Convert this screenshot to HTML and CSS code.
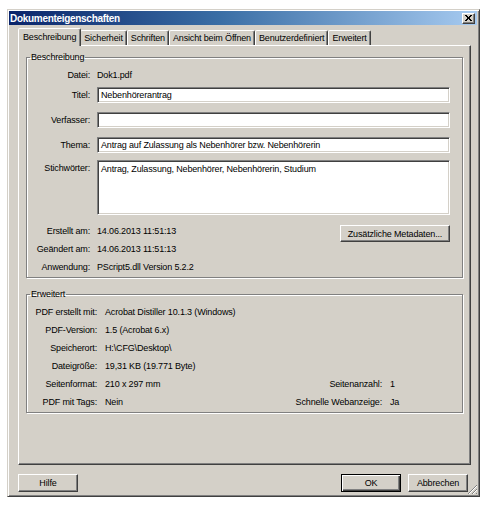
FILE: index.html
```html
<!DOCTYPE html>
<html lang="de">
<head>
    <meta charset="utf-8">
    <title>Dokumenteigenschaften</title>
    <link rel="stylesheet" href="styles.css">
</head>
<body>
    <div class="fenster">
        <div class="titelleiste">
            <span class="titeltext">Dokumenteigenschaften</span>
            <button class="schliessen">
                <svg width="7" height="6" viewBox="0 0 7 6"><path d="M0 0 L6 6 M1 0 L7 6 M6 0 L0 6 M7 0 L1 6" stroke="#000" stroke-width="1"/></svg>
            </button>
        </div>

        <nav class="reiter">
            <button class="reiter-knopf aktiv">Beschreibung</button>
            <button class="reiter-knopf">Sicherheit</button>
            <button class="reiter-knopf">Schriften</button>
            <button class="reiter-knopf">Ansicht beim Öffnen</button>
            <button class="reiter-knopf">Benutzerdefiniert</button>
            <button class="reiter-knopf">Erweitert</button>
        </nav>

        <section class="panel">
            <fieldset class="gruppe beschreibung">
                <legend>Beschreibung</legend>
                <div class="zeile datei"><span class="etikett">Datei:</span><span>Dok1.pdf</span></div>
                <div class="zeile titel"><span class="etikett">Titel:</span><div class="feld">Nebenhörerantrag</div></div>
                <div class="zeile verfasser"><span class="etikett">Verfasser:</span><div class="feld"></div></div>
                <div class="zeile thema"><span class="etikett">Thema:</span><div class="feld">Antrag auf Zulassung als Nebenhörer bzw. Nebenhörerin</div></div>
                <div class="zeile stichwoerter"><span class="etikett">Stichwörter:</span><div class="feld gross">Antrag, Zulassung, Nebenhörer, Nebenhörerin, Studium</div></div>
                <div class="meta">
                    <span class="etikett">Erstellt am:</span><span class="wert">14.06.2013 11:51:13</span>
                    <button class="knopf metadaten">Zusätzliche Metadaten...</button>
                    <span class="etikett">Geändert am:</span><span class="wert">14.06.2013 11:51:13</span>
                    <span class="etikett">Anwendung:</span><span class="wert">PScript5.dll Version 5.2.2</span>
                </div>
            </fieldset>

            <fieldset class="gruppe erweitert">
                <legend>Erweitert</legend>
                <div class="liste">
                    <span class="etikett">PDF erstellt mit:</span><span class="breit">Acrobat Distiller 10.1.3 (Windows)</span>
                    <span class="etikett">PDF-Version:</span><span class="breit">1.5 (Acrobat 6.x)</span>
                    <span class="etikett">Speicherort:</span><span class="breit">H:\CFG\Desktop\</span>
                    <span class="etikett">Dateigröße:</span><span class="breit">19,31 KB (19.771 Byte)</span>
                    <span class="etikett">Seitenformat:</span><span>210 x 297 mm</span>
                    <span class="etikett">Seitenanzahl:</span><span>1</span>
                    <span class="etikett">PDF mit Tags:</span><span>Nein</span>
                    <span class="etikett">Schnelle Webanzeige:</span><span>Ja</span>
                </div>
            </fieldset>
        </section>

        <div class="knoepfe">
            <button class="knopf">Hilfe</button>
            <span class="luft"></span>
            <button class="knopf standard">OK</button>
            <button class="knopf">Abbrechen</button>
        </div>

        <svg class="griff" width="11" height="11" viewBox="0 0 11 11">
            <path d="M10 1 L1 10 M10 5 L5 10 M10 9 L9 10" stroke="#808080" stroke-width="1"/>
            <path d="M10 2 L2 10 M10 6 L6 10" stroke="#fff" stroke-width="1"/>
        </svg>
    </div>
</body>
</html>
```

FILE: styles.css
```css
* {
    box-sizing: border-box;
}

body {
    margin: 0;
    background: #fff;
    font-family: "Liberation Sans", Arial, sans-serif;
    font-size: 9px;
    letter-spacing: -0.15px;
    color: #000;
}

button {
    font: inherit;
    letter-spacing: inherit;
    color: inherit;
}

/* Dialogfenster */
.fenster {
    position: relative;
    margin: 9px 0 0 7px;
    width: 473px;
    height: 488px;
    padding: 1px 2px 2px 1px;
    background: #d4d0c8;
    border: 1px solid;
    border-color: #d4d0c8 #404040 #404040 #d4d0c8;
    box-shadow: inset 1px 1px 0 #fff, inset -1px -1px 0 #808080;
}

.titelleiste {
    display: flex;
    justify-content: space-between;
    align-items: center;
    height: 14px;
    padding: 0 2px 0 1px;
    background: linear-gradient(to right, #0a246a, #3a6ea5 45%, #a6caf0);
}

.titeltext {
    color: #fff;
    font-weight: bold;
    font-size: 10px;
    letter-spacing: -0.3px;
}

.schliessen {
    display: flex;
    align-items: center;
    justify-content: center;
    width: 13px;
    height: 11px;
    padding: 0;
    background: #d4d0c8;
    border: 1px solid;
    border-color: #fff #404040 #404040 #fff;
    box-shadow: inset -1px -1px 0 #808080;
}

/* Reiter */
.reiter {
    display: flex;
    align-items: flex-end;
    height: 17px;
    margin-top: 3px;
    padding-left: 11px;
}

.reiter-knopf {
    height: 15px;
    padding: 0 3px;
    background: #d4d0c8;
    border: 1px solid;
    border-bottom: none;
    border-color: #fff #404040 transparent #fff;
    box-shadow: inset -1px 0 0 #808080;
    border-radius: 2px 2px 0 0;
    line-height: 13px;
}

.reiter-knopf.aktiv {
    position: relative;
    z-index: 1;
    height: 18px;
    margin: 0 -1px -1px -2px;
    padding: 0 4px;
}

.panel {
    width: 453px;
    height: 420px;
    margin-left: 9px;
    padding: 5px 7px 0 7px;
    border: 1px solid;
    border-color: #fff #404040 #404040 #fff;
    box-shadow: inset -1px -1px 0 #808080;
}

/* Gruppenrahmen */
.gruppe {
    margin: 0;
    padding: 0;
    border: 1px solid #808080;
    box-shadow: 1px 1px 0 #fff, inset 1px 1px 0 #fff;
}

.gruppe legend {
    margin-left: 3px;
    padding: 0 1px;
    line-height: 12px;
}

.beschreibung {
    padding: 4px 12px 1px 0;
}

.zeile {
    display: grid;
    grid-template-columns: 63px 1fr;
    column-gap: 7px;
    align-items: center;
    height: 16px;
}

.etikett {
    text-align: right;
    white-space: nowrap;
}

.titel {
    margin-top: 4px;
}

.verfasser,
.thema {
    margin-top: 9px;
}

.stichwoerter {
    margin-top: 7px;
    height: 55px;
    align-items: start;
}

.stichwoerter .etikett {
    line-height: 16px;
}

.feld {
    height: 16px;
    padding: 0 3px;
    line-height: 14px;
    background: #fff;
    border: 1px solid;
    border-color: #808080 #fff #fff #808080;
    box-shadow: inset 1px 1px 0 #404040, inset -1px -1px 0 #d4d0c8;
    white-space: nowrap;
    overflow: hidden;
}

.feld.gross {
    height: 55px;
    padding-top: 1px;
}

.meta {
    display: grid;
    grid-template-columns: 63px 1fr 110px;
    grid-auto-rows: 18px;
    column-gap: 7px;
    align-items: center;
    margin-top: 7px;
}

.meta .etikett {
    grid-column: 1;
}

.meta .wert {
    grid-column: 2;
}

.knopf {
    height: 18px;
    padding: 0;
    background: #d4d0c8;
    border: 1px solid;
    border-color: #fff #404040 #404040 #fff;
    box-shadow: inset -1px -1px 0 #808080;
    white-space: nowrap;
}

.metadaten {
    grid-column: 3;
    grid-row: 1;
    align-self: start;
    height: 17px;
    margin-top: 3px;
}

.erweitert {
    margin-top: 10px;
    padding: 3px 0 1px 0;
}

.liste {
    display: grid;
    grid-template-columns: 70px 1fr auto 64px;
    grid-auto-rows: 18px;
    column-gap: 8px;
    align-items: center;
    padding-right: 8px;
}

.liste .breit {
    grid-column: span 3;
}

/* Knopfleiste unten */
.knoepfe {
    display: flex;
    gap: 7px;
    margin: 9px 0 0 9px;
    width: 450px;
}

.knoepfe .knopf {
    width: 60px;
}

.knoepfe .luft {
    flex: 1;
}

.knopf.standard {
    border-color: #000;
    box-shadow: inset 1px 1px 0 #fff, inset -1px -1px 0 #404040, inset -2px -2px 0 #808080;
}

.griff {
    position: absolute;
    right: 1px;
    bottom: 1px;
}
```
